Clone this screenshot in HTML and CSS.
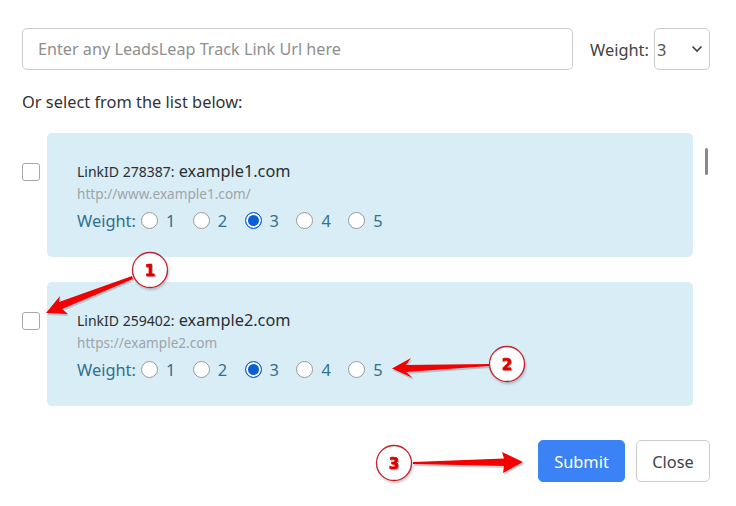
FILE: index.html
```html
<!DOCTYPE html>
<html lang="en">
<head>
    <meta charset="UTF-8">
    <title>Add Link</title>
    <meta name="viewport" content="width=device-width, initial-scale=1.0">
    <link rel="stylesheet" href="styles.css">
</head>
<body>
    <div class="dialog">
        <div class="top-row">
            <input class="url-input" type="text" placeholder="Enter any LeadsLeap Track Link Url here">
            <label class="top-weight" for="topWeight">Weight:</label>
            <select class="weight-select" id="topWeight">
                <option>1</option>
                <option>2</option>
                <option selected>3</option>
                <option>4</option>
                <option>5</option>
            </select>
        </div>

        <p class="list-title">Or select from the list below:</p>

        <div class="list-wrap">
            <div class="list">
                <div class="list-row">
                    <input class="row-check" type="checkbox">
                    <div class="card">
                        <div class="link-name"><span class="link-id">LinkID 278387:</span> example1.com</div>
                        <div class="link-url">http://www.example1.com/</div>
                        <div class="weight-row">
                            <span class="weight-label">Weight:</span>
                            <label class="weight-opt"><input type="radio" name="w1">1</label>
                            <label class="weight-opt"><input type="radio" name="w1">2</label>
                            <label class="weight-opt"><input type="radio" name="w1" checked>3</label>
                            <label class="weight-opt"><input type="radio" name="w1">4</label>
                            <label class="weight-opt"><input type="radio" name="w1">5</label>
                        </div>
                    </div>
                </div>
                <div class="list-row">
                    <input class="row-check" type="checkbox">
                    <div class="card">
                        <div class="link-name"><span class="link-id">LinkID 259402:</span> example2.com</div>
                        <div class="link-url">https://example2.com</div>
                        <div class="weight-row">
                            <span class="weight-label">Weight:</span>
                            <label class="weight-opt"><input type="radio" name="w2">1</label>
                            <label class="weight-opt"><input type="radio" name="w2">2</label>
                            <label class="weight-opt"><input type="radio" name="w2" checked>3</label>
                            <label class="weight-opt"><input type="radio" name="w2">4</label>
                            <label class="weight-opt"><input type="radio" name="w2">5</label>
                        </div>
                    </div>
                </div>
            </div>
            <div class="scroll-thumb"></div>
        </div>

        <div class="actions">
            <button class="btn btn-submit" type="button">Submit</button>
            <button class="btn btn-close" type="button">Close</button>
        </div>
    </div>

    <!-- red callouts drawn on top of the screenshot -->
    <svg class="callouts" width="736" height="506" viewBox="0 0 736 506">
        <g class="arrow-shadow" transform="translate(1 2)">
            <polygon points="132,276 59,302 60,296 46,313 68,314 62,309 133,279"/>
            <polygon points="489,364 406,365 411,358 392,368.5 413,378 406,372 489,366"/>
            <polygon points="413,462 504,458.5 502,452 523,462 503,473 504,466 413,464"/>
        </g>
        <g class="arrow">
            <polygon points="132,276 59,302 60,296 46,313 68,314 62,309 133,279"/>
            <polygon points="489,364 406,365 411,358 392,368.5 413,378 406,372 489,366"/>
            <polygon points="413,462 504,458.5 502,452 523,462 503,473 504,466 413,464"/>
        </g>

        <circle class="badge" cx="150" cy="270" r="17.5"/>
        <circle class="badge" cx="507" cy="364" r="17.5"/>
        <circle class="badge" cx="394" cy="463" r="17.5"/>
        <text class="badge-num" x="150" y="276">1</text>
        <text class="badge-num" x="507" y="370">2</text>
        <text class="badge-num" x="394" y="469">3</text>
    </svg>
</body>
</html>
```

FILE: styles.css
```css
/* Global Reset */
* {
    margin: 0;
    padding: 0;
    box-sizing: border-box;
}
body {
    font-family: 'Noto Sans', 'Open Sans', sans-serif;
    background: #fff;
    color: #333;
    width: 736px;
    height: 506px;
    overflow: hidden;
    position: relative;
}
.dialog {
    padding: 28px 26px 0 22px;
}
.top-row {
    display: flex;
    align-items: center;
    height: 42px;
}
.url-input {
    width: 551px;
    height: 42px;
    padding: 0 15px;
    border: 1px solid #ccc;
    border-radius: 5px;
    font-family: inherit;
    font-size: 16.2px;
    color: #333;
}
.url-input::placeholder {
    color: #8f8f8f;
}
.top-weight {
    margin-left: 17px;
    width: 64px;
    font-size: 16.4px;
    color: #444;
}
.weight-select {
    appearance: none;
    width: 56px;
    height: 42px;
    padding-left: 2px;
    border: 1px solid #ccc;
    border-radius: 5px;
    background: #fff url("data:image/svg+xml;utf8,<svg xmlns='http://www.w3.org/2000/svg' width='12' height='8' viewBox='0 0 12 8'><path d='M1.5 1.5 6 6l4.5-4.5' fill='none' stroke='%23444' stroke-width='1.7'/></svg>") no-repeat right 6px center;
    font-family: inherit;
    font-size: 16.4px;
    color: #555;
}
.list-title {
    margin-top: 20px;
    height: 24px;
    line-height: 24px;
    font-size: 16.4px;
    color: #333;
}
.list-wrap {
    display: flex;
    margin-top: 19px;
}
.list {
    width: 671px;
    display: flex;
    flex-direction: column;
    gap: 25px;
}
.list-row {
    display: flex;
    align-items: flex-start;
}
.row-check {
    appearance: none;
    width: 18px;
    height: 18px;
    margin-top: 30px;
    margin-right: 7px;
    background: #fff;
    border: 1.5px solid #a8a8a8;
    border-radius: 3px;
    flex-shrink: 0;
}
.card {
    width: 646px;
    height: 124px;
    padding: 26px 30px 0;
    background: #d9edf7;
    border-radius: 5px;
}
.link-name {
    height: 25px;
    line-height: 25px;
    font-size: 16.3px;
    color: #2a2f33;
}
.link-id {
    font-size: 14px;
}
.link-url {
    height: 20px;
    line-height: 20px;
    font-size: 13.6px;
    color: #a0a4a7;
}
.weight-row {
    display: flex;
    align-items: center;
    height: 30px;
    margin-top: 1px;
    color: #31708f;
    font-size: 16.4px;
}
.weight-label {
    width: 64px;
}
.weight-opt {
    display: flex;
    align-items: center;
    width: 51.8px;
}
.weight-opt input {
    appearance: none;
    width: 17px;
    height: 17px;
    margin-right: 8px;
    background: #fff;
    border: 1px solid #999;
    border-radius: 50%;
}
.weight-opt input:checked {
    background: #0b5ed7;
    border: 1px solid #0b5ed7;
    box-shadow: inset 0 0 0 2px #fff;
}
.scroll-thumb {
    width: 3px;
    height: 27px;
    margin-top: 15px;
    margin-left: 12px;
    background: #888;
    border-radius: 2px;
}
.actions {
    display: flex;
    justify-content: flex-end;
    gap: 11px;
    margin-top: 34px;
}
.btn {
    height: 42px;
    border-radius: 5px;
    font-family: inherit;
    font-size: 16.4px;
    cursor: pointer;
}
.btn-submit {
    width: 87px;
    background-color: #3b82f6;
    border: 1px solid #3b82f6;
    color: #fff;
}
.btn-close {
    width: 74px;
    background-color: #fff;
    border: 1px solid #ccc;
    color: #444;
}
.callouts {
    position: absolute;
    left: 0;
    top: 0;
    pointer-events: none;
}
.arrow {
    fill: #f50000;
}
.arrow-shadow {
    fill: #000;
    opacity: 0.18;
}
.badge {
    fill: #fff;
    stroke: #c8202a;
    stroke-width: 1.3;
    filter: drop-shadow(1px 2px 1px rgba(0, 0, 0, 0.2));
}
.badge-num {
    font-family: 'DejaVu Sans', sans-serif;
    font-weight: bold;
    font-size: 15px;
    fill: #dc0000;
    stroke: #dc0000;
    stroke-width: 0.7;
    text-anchor: middle;
    filter: drop-shadow(1px 1px 0 rgba(90, 0, 0, 0.35));
}
```
